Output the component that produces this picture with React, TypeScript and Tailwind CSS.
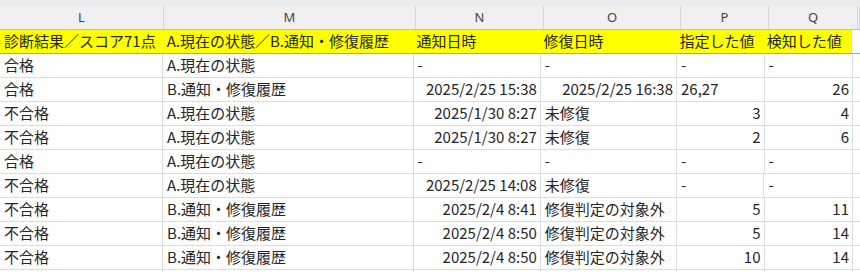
import React from "react"

const cols = ["w-[164px]", "w-[252px]", "w-[128px]", "w-[137px]", "w-[88px]", "w-[89px]", "flex-1"]
const letters = ["L", "M", "N", "O", "P", "Q", ""]

type Cell = { t: string; r?: boolean }

const head = ["診断結果／スコア71点", "A.現在の状態／B.通知・修復履歴", "通知日時", "修復日時", "指定した値", "検知した値", ""]

const rows: Cell[][] = [
    [{ t: "合格" }, { t: "A.現在の状態" }, { t: "-" }, { t: "-" }, { t: "-" }, { t: "-" }],
    [{ t: "合格" }, { t: "B.通知・修復履歴" }, { t: "2025/2/25 15:38", r: true }, { t: "2025/2/25 16:38", r: true }, { t: "26,27" }, { t: "26", r: true }],
    [{ t: "不合格" }, { t: "A.現在の状態" }, { t: "2025/1/30 8:27", r: true }, { t: "未修復" }, { t: "3", r: true }, { t: "4", r: true }],
    [{ t: "不合格" }, { t: "A.現在の状態" }, { t: "2025/1/30 8:27", r: true }, { t: "未修復" }, { t: "2", r: true }, { t: "6", r: true }],
    [{ t: "合格" }, { t: "A.現在の状態" }, { t: "-" }, { t: "-" }, { t: "-" }, { t: "-" }],
    [{ t: "不合格" }, { t: "A.現在の状態" }, { t: "2025/2/25 14:08", r: true }, { t: "未修復" }, { t: "-" }, { t: "-" }],
    [{ t: "不合格" }, { t: "B.通知・修復履歴" }, { t: "2025/2/4 8:41", r: true }, { t: "修復判定の対象外" }, { t: "5", r: true }, { t: "11", r: true }],
    [{ t: "不合格" }, { t: "B.通知・修復履歴" }, { t: "2025/2/4 8:50", r: true }, { t: "修復判定の対象外" }, { t: "5", r: true }, { t: "14", r: true }],
    [{ t: "不合格" }, { t: "B.通知・修復履歴" }, { t: "2025/2/4 8:50", r: true }, { t: "修復判定の対象外" }, { t: "10", r: true }, { t: "14", r: true }],
    [],
]

export default function App() {
    return (
        <div className="w-[860px] h-[272px] overflow-hidden bg-white text-[15px] text-[#262626]"
            style={{ fontFamily: '"Noto Sans CJK JP", "Noto Sans", sans-serif' }}>
            {/* column letters */}
            <div className="h-[6px] bg-[#e9ecef]"></div>
            <div className="flex h-[24px] bg-[#f0f0f0] border-b border-[#bfbfbf]">
                {letters.map((l, i) => (
                    <div key={i} className={`${cols[i]} flex items-center justify-center border-r border-[#d8d8d8] text-[13px] text-[#444]`}
                        style={{ fontFamily: '"Noto Sans", sans-serif' }}>
                        {l}
                    </div>
                ))}
            </div>
            {/* yellow header */}
            <div className="flex h-[24px] bg-[#ffff00] border-b border-[#a6a6a6]">
                {head.map((h, i) => (
                    <div key={i} className={`${cols[i]} flex items-center px-[4px] whitespace-nowrap ${i === 6 ? "bg-white border-l border-[#d8d8d8]" : ""}`}>
                        {h}
                    </div>
                ))}
            </div>
            {rows.map((row, ri) => (
                <div key={ri} className="flex h-[24px] border-b border-[#dcdcdc]">
                    {cols.map((c, i) => {
                        const cell = row[i]
                        return (
                            <div key={i} className={`${c} flex items-center px-[3px] whitespace-nowrap border-r border-[#dcdcdc] ${cell?.r ? "justify-end" : "justify-start pl-[4px]"} ${i === 6 ? "border-r-0" : ""}`}>
                                {cell?.t}
                            </div>
                        )
                    })}
                </div>
            ))}
        </div>
    )
}
